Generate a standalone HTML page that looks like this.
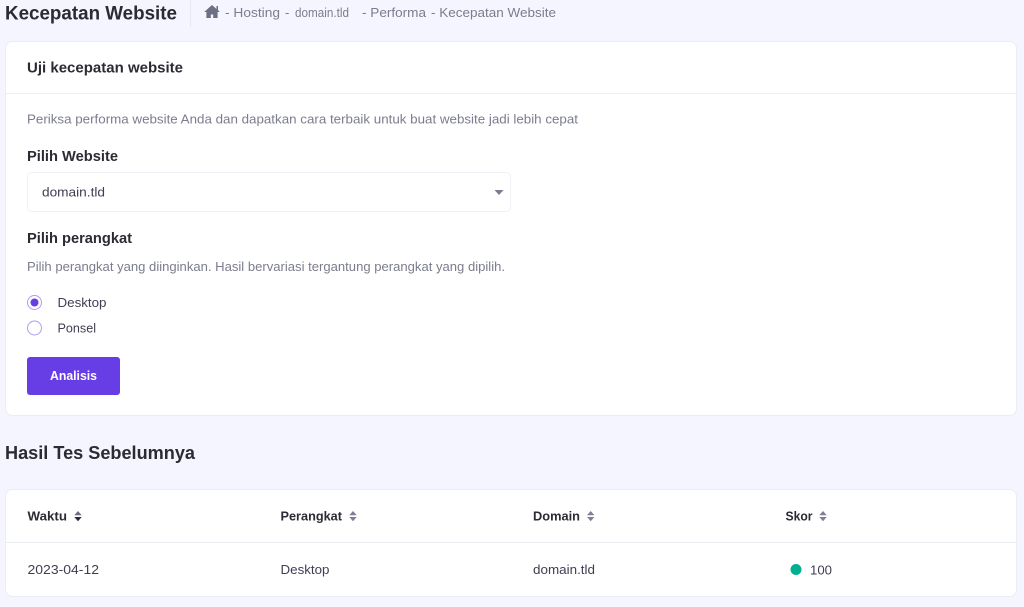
<!DOCTYPE html>
<html lang="id">
<head>
<meta charset="utf-8">
<title>Kecepatan Website</title>
<style>
html,body{margin:0;padding:0;background:#f4f5ff;width:1024px;height:607px;overflow:hidden}
svg{display:block;filter:blur(.35px)}
text{font-family:"Liberation Sans",sans-serif;white-space:pre}
.b{font-weight:700;fill:#2b2c33}
.g{fill:#7b7d8e}
.d{fill:#3f3e52}
</style>
</head>
<body>
<svg width="1024" height="607" viewBox="0 0 1024 607" xmlns="http://www.w3.org/2000/svg">
<rect width="1024" height="607" fill="#f4f5ff"/>
<text class="b" x="5" y="19.500" font-size="19" textLength="172" lengthAdjust="spacingAndGlyphs">Kecepatan Website</text>
<rect x="190" y="0" width="1" height="27" fill="#e6e7f2"/>
<path d="M212 5 L216.500 9 V6 H218 V10.300 L219.800 12 H217.600 V18 H213.200 V14.500 H210.800 V18 H206.400 V12 H204.200 Z" fill="#6d6f84"/>
<g class="g" font-size="13">
<text x="225" y="17" textLength="55" lengthAdjust="spacingAndGlyphs">- Hosting</text>
<text x="285" y="17">-</text>
<text x="295" y="17" textLength="54" lengthAdjust="spacingAndGlyphs" font-size="13">domain.tld</text>
<text x="362" y="17" textLength="64" lengthAdjust="spacingAndGlyphs">- Performa</text>
<text x="431" y="17" textLength="125" lengthAdjust="spacingAndGlyphs">- Kecepatan Website</text>
</g>

<rect x="5.500" y="41.500" width="1011" height="374" rx="7" fill="#fff" stroke="#ebecf5"/>
<rect x="6" y="93" width="1010" height="1" fill="#eeeff4"/>
<text class="b" x="27" y="72.500" font-size="14.500" textLength="156" lengthAdjust="spacingAndGlyphs">Uji kecepatan website</text>
<text class="g" x="27" y="123.500" font-size="13" textLength="551" lengthAdjust="spacingAndGlyphs">Periksa performa website Anda dan dapatkan cara terbaik untuk buat website jadi lebih cepat</text>
<text class="b" x="27" y="161" font-size="14.500" textLength="91" lengthAdjust="spacingAndGlyphs">Pilih Website</text>
<rect x="27.500" y="172.500" width="483" height="39" rx="4" fill="#fff" stroke="#f0f1f6"/>
<text class="d" x="42" y="196.500" font-size="13" textLength="63" lengthAdjust="spacingAndGlyphs">domain.tld</text>
<path d="M494.500 190 H503.500 L499 195 Z" fill="#7b7d8e"/>
<text class="b" x="27" y="243" font-size="14.500" textLength="105" lengthAdjust="spacingAndGlyphs">Pilih perangkat</text>
<text class="g" x="27" y="271" font-size="13" textLength="478" lengthAdjust="spacingAndGlyphs">Pilih perangkat yang diinginkan. Hasil bervariasi tergantung perangkat yang dipilih.</text>

<circle cx="34.500" cy="302.500" r="7" fill="#fff" stroke="#b09af3"/>
<circle cx="34.500" cy="302.500" r="4" fill="#673de6"/>
<text class="d" x="57.500" y="307" font-size="13" textLength="49" lengthAdjust="spacingAndGlyphs">Desktop</text>
<circle cx="34.500" cy="328" r="7" fill="#fff" stroke="#b09af3"/>
<text class="d" x="57.500" y="332.500" font-size="13" textLength="38.500" lengthAdjust="spacingAndGlyphs">Ponsel</text>

<rect x="27" y="357" width="93" height="38" rx="3" fill="#673de6"/>
<text x="50" y="380" font-size="13" font-weight="700" fill="#fff" textLength="47" lengthAdjust="spacingAndGlyphs">Analisis</text>

<text class="b" x="5" y="459" font-size="18" textLength="190" lengthAdjust="spacingAndGlyphs">Hasil Tes Sebelumnya</text>

<rect x="5.500" y="489.500" width="1011" height="107" rx="7" fill="#fff" stroke="#ebecf5"/>
<rect x="6" y="542" width="1010" height="1" fill="#ecedf2"/>

<g font-size="13">
<text class="b" x="27.500" y="520.500" textLength="39.500" lengthAdjust="spacingAndGlyphs">Waktu</text>
<text class="b" x="280.500" y="520.500" textLength="61.500" lengthAdjust="spacingAndGlyphs">Perangkat</text>
<text class="b" x="533" y="520.500" textLength="47" lengthAdjust="spacingAndGlyphs">Domain</text>
<text class="b" x="785.500" y="520.500" textLength="27" lengthAdjust="spacingAndGlyphs">Skor</text>
</g>
<path d="M78 511 L81.700 515.300 H74.300 Z" fill="#6d6f84"/>
<path d="M74.300 517 H81.700 L78 521.300 Z" fill="#2b2c33"/>
<path d="M353 511 L356.700 515.300 H349.300 Z M349.300 517 H356.700 L353 521.300 Z" fill="#7d7f96"/>
<path d="M590.700 511 L594.400 515.300 H587 Z M587 517 H594.400 L590.700 521.300 Z" fill="#7d7f96"/>
<path d="M823 511 L826.700 515.300 H819.300 Z M819.300 517 H826.700 L823 521.300 Z" fill="#7d7f96"/>

<g class="d" font-size="13">
<text x="27.500" y="574" textLength="71.500" lengthAdjust="spacingAndGlyphs">2023-04-12</text>
<text x="280.500" y="574" textLength="49" lengthAdjust="spacingAndGlyphs">Desktop</text>
<text x="533" y="574" textLength="62" lengthAdjust="spacingAndGlyphs">domain.tld</text>
<text x="810" y="574.500" textLength="22" lengthAdjust="spacingAndGlyphs">100</text>
</g>
<circle cx="796" cy="569.500" r="5.500" fill="#00b090"/>
</svg>
</body>
</html>
